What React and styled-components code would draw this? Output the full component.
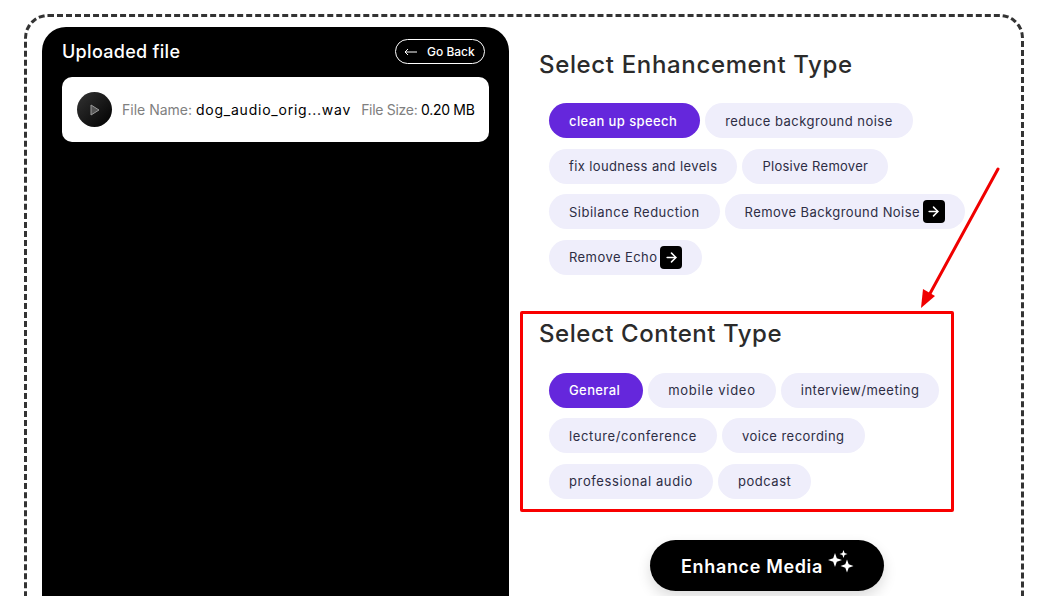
import React from 'react';
import styled, { createGlobalStyle } from 'styled-components';
import { ArrowRight } from 'lucide-react';

const GlobalStyle = createGlobalStyle`
  html, body {
    margin: 0;
    height: 100%;
    background: #fff;
  }
  body {
    font-family: Inter, "Noto Sans", "Liberation Sans", sans-serif;
    overflow: hidden;
  }
  #root {
    height: 100vh;
    overflow: hidden;
    position: relative;
  }
`;

const Frame = styled.div`
  display: flex;
  width: 1000px;
  height: 700px;
  box-sizing: border-box;
  margin: 14px 0 0 24px;
  padding: 10px 15px;
  border: 3px dashed #333;
  border-radius: 24px;
`;

const FilePanel = styled.div`
  width: 467px;
  height: 640px;
  flex-shrink: 0;
  box-sizing: border-box;
  padding: 12px 20px;
  background: #000;
  border-radius: 24px;
`;

const PanelHead = styled.div`
  display: flex;
  align-items: center;
  justify-content: space-between;
  height: 25px;
  padding-right: 4px;
  margin-bottom: 13px;
`;

const PanelTitle = styled.h2`
  margin: 0;
  font-size: 18px;
  font-weight: 500;
  letter-spacing: 0.3px;
  color: #fff;
`;

const BackButton = styled.button`
  display: flex;
  align-items: center;
  gap: 10px;
  width: 90px;
  height: 25px;
  box-sizing: border-box;
  padding: 0 0 0 8px;
  background: transparent;
  border: 1px solid #fff;
  border-radius: 13px;
  font-family: inherit;
  font-size: 12px;
  font-weight: 500;
  color: #fff;
`;

const FileCard = styled.div`
  display: flex;
  align-items: center;
  height: 65px;
  box-sizing: border-box;
  padding: 0 15px;
  background: #fff;
  border-radius: 10px;
`;

const PlayButton = styled.div`
  display: flex;
  align-items: center;
  justify-content: center;
  width: 35px;
  height: 35px;
  flex-shrink: 0;
  margin-right: 10px;
  border-radius: 50%;
  background: linear-gradient(135deg, #333 0%, #000 100%);
`;

const FileMeta = styled.div`
  font-size: 14px;
  color: #808080;
  white-space: nowrap;
  margin-left: ${(p) => p.$offset || 0}px;
  letter-spacing: ${(p) => p.$track || 0}px;
`;

const MetaValue = styled.span`
  color: #000;
`;

const LongMetaValue = styled(MetaValue)`
  letter-spacing: 0.77px;
`;

const OptionsColumn = styled.div`
  flex: 1;
  display: flex;
  flex-direction: column;
  padding: 0 11px 0 30px;
`;

const SectionTitle = styled.h3`
  margin: ${(p) => p.$top}px 0 0;
  height: 30px;
  line-height: 30px;
  font-size: 24px;
  font-weight: 500;
  letter-spacing: ${(p) => p.$track}px;
  color: #2b2b2b;
`;

const ChipGrid = styled.div`
  display: flex;
  flex-direction: column;
  gap: 10.6px;
  padding-left: 10px;
  margin-top: ${(p) => p.$top}px;
`;

const ChipRow = styled.div`
  display: flex;
  gap: 5px;
`;

const Chip = styled.div`
  display: flex;
  align-items: center;
  justify-content: center;
  gap: 3px;
  height: 35px;
  box-sizing: border-box;
  padding: 0 ${(p) => (p.$active ? 23 : 20)}px 0 20px;
  border-radius: 18px;
  font-size: 13px;
  letter-spacing: ${(p) => p.$track}px;
  white-space: nowrap;
  background: ${(p) => (p.$active ? '#6527dc' : '#efeefb')};
  color: ${(p) => (p.$active ? '#fff' : '#2d2d44')};
  font-weight: ${(p) => (p.$active ? 500 : 400)};
`;

const ChipArrow = styled.span`
  display: flex;
  align-items: center;
  justify-content: center;
  width: 22px;
  height: 23px;
  border-radius: 4px;
  background: #000;
  color: #fff;
`;

const EnhanceButton = styled.button`
  display: flex;
  align-items: center;
  justify-content: center;
  align-self: center;
  gap: 4px;
  width: 234px;
  height: 51px;
  margin-top: 41px;
  padding: 2px 0 0 2px;
  background: #000;
  border: 0;
  border-radius: 26px;
  box-shadow: 0 6px 14px rgba(0, 0, 0, 0.14);
  font-family: inherit;
  font-size: 18px;
  font-weight: 600;
  letter-spacing: 0.65px;
  color: #fff;
`;

const AnnotationBox = styled.div`
  position: absolute;
  left: 520px;
  top: 311px;
  width: 434px;
  height: 201px;
  box-sizing: border-box;
  border: 3px solid #f90000;
  border-radius: 2px;
  pointer-events: none;
`;

const AnnotationArrow = styled.svg`
  position: absolute;
  left: 915px;
  top: 165px;
  pointer-events: none;
`;

const SparkleIcon = styled.svg`
  margin-top: -8px;
`;

const enhancementRows = [
  [
    { label: 'clean up speech', active: true, track: 0.4 },
    { label: 'reduce background noise', track: 0.47 },
  ],
  [
    { label: 'fix loudness and levels', track: 0.38 },
    { label: 'Plosive Remover', track: 0.27 },
  ],
  [
    { label: 'Sibilance Reduction', track: 0.5 },
    { label: 'Remove Background Noise', track: 0.42, link: true },
  ],
  [{ label: 'Remove Echo', track: 0.43, link: true }],
];

const contentRows = [
  [
    { label: 'General', active: true, track: 0.39 },
    { label: 'mobile video', track: 0.76 },
    { label: 'interview/meeting', track: 0.49 },
  ],
  [
    { label: 'lecture/conference', track: 0.62 },
    { label: 'voice recording', track: 0.46 },
  ],
  [
    { label: 'professional audio', track: 0.62 },
    { label: 'podcast', track: 0.53 },
  ],
];

const Chips = ({ rows, top }) => (
  <ChipGrid $top={top}>
    {rows.map((row, i) => (
      <ChipRow key={i}>
        {row.map((chip) => (
          <Chip key={chip.label} $active={chip.active} $track={chip.track}>
            {chip.label}
            {chip.link && (
              <ChipArrow>
                <ArrowRight size={15} strokeWidth={2.4} />
              </ChipArrow>
            )}
          </Chip>
        ))}
      </ChipRow>
    ))}
  </ChipGrid>
);

const Sparkles = () => (
  <SparkleIcon width="28" height="26" viewBox="0 0 28 26" fill="#fff">
    <path d="M8 4 L9.8 9.2 L15 11 L9.8 12.8 L8 18 L6.2 12.8 L1 11 L6.2 9.2 Z" />
    <path d="M16.5 1 L17.6 4 L20.5 5 L17.6 6 L16.5 9 L15.4 6 L12.5 5 L15.4 4 Z" />
    <path d="M20 10.5 L21.7 15.3 L26.5 17 L21.7 18.7 L20 23.5 L18.3 18.7 L13.5 17 L18.3 15.3 Z" />
  </SparkleIcon>
);

const App = () => (
  <>
    <GlobalStyle />
    <Frame>
      <FilePanel>
        <PanelHead>
          <PanelTitle>Uploaded file</PanelTitle>
          <BackButton>
            <svg width="13" height="8" viewBox="0 0 13 8" fill="none" stroke="#fff" strokeWidth="1">
              <path d="M13 4 H1 M4 1 L1 4 L4 7" />
            </svg>
            Go Back
          </BackButton>
        </PanelHead>
        <FileCard>
          <PlayButton>
            <svg width="10" height="12" viewBox="0 0 10 12" fill="#555" stroke="#9a9a9a" strokeWidth="1">
              <path d="M1 1 L9 6 L1 11 Z" />
            </svg>
          </PlayButton>
          <FileMeta>
            File Name: <LongMetaValue>dog_audio_orig...wav</LongMetaValue>
          </FileMeta>
          <FileMeta $offset={10} $track={-0.3}>
            File Size: <MetaValue>0.20 MB</MetaValue>
          </FileMeta>
        </FileCard>
      </FilePanel>
      <OptionsColumn>
        <SectionTitle $top={23} $track={0.65}>Select Enhancement Type</SectionTitle>
        <Chips rows={enhancementRows} top={23} />
        <SectionTitle $top={44} $track={0.55}>Select Content Type</SectionTitle>
        <Chips rows={contentRows} top={24} />
        <EnhanceButton>
          Enhance Media
          <Sparkles />
        </EnhanceButton>
      </OptionsColumn>
    </Frame>
    <AnnotationBox />
    <AnnotationArrow width="90" height="150" viewBox="0 0 90 150" fill="none">
      <path d="M83 4 L12 134" stroke="#f00000" strokeWidth="3" strokeLinecap="round" />
      <path d="M6 143 L8 124 L20 131 Z" fill="#f00000" />
    </AnnotationArrow>
  </>
);

export default App;
